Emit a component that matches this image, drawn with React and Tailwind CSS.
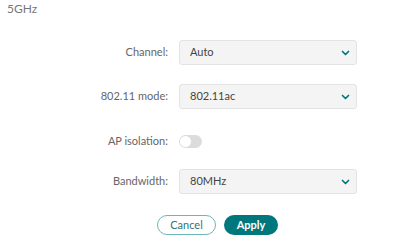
import React, { useState } from 'react';

const Chevron = () => (
  <svg width="9" height="6" viewBox="0 0 9 6" className="shrink-0">
    <path d="M1.5 1.5 L4.5 4.5 L7.5 1.5" fill="none" stroke="#00777d" strokeWidth="1.7" strokeLinecap="round" strokeLinejoin="round" />
  </svg>
);

const Select = ({ value }) => (
  <div className="w-[178px] h-[25px] bg-[#f4f4f4] border border-[#e3e3e3] rounded-[3px] flex items-center justify-between pl-[10px] pr-[6px] text-[11px] text-[#444]">
    <span>{value}</span>
    <Chevron />
  </div>
);

const Row = ({ label, className, children }) => (
  <div className={`flex items-center ${className}`}>
    <div className="w-[168px] text-right text-[11px] text-[#666]">{label}</div>
    <div className="ml-[11px] flex">{children}</div>
  </div>
);

const App = () => {
  const [iso, setIso] = useState(false);
  return (
    <div className="w-[400px] h-[249px] bg-white relative" style={{ fontFamily: 'Lato, "Liberation Sans", sans-serif' }}>
      <div className="pl-[7px] pt-[1px] text-[12px] leading-[16px] text-[#777]">5GHz</div>
      <div className="mt-[23px] flex flex-col">
        <Row label="Channel:"><Select value="Auto" /></Row>
        <Row label="802.11 mode:" className="mt-[19px]"><Select value="802.11ac" /></Row>
        <Row label="AP isolation:" className="mt-[26px] h-[13px]">
          <button onClick={() => setIso(!iso)} className="w-[23px] h-[13px] rounded-full bg-[#dcdcdc] flex items-center px-[1px]">
            <span className="w-[11px] h-[11px] rounded-full bg-white block" />
          </button>
        </Row>
        <Row label="Bandwidth:" className="mt-[21px]"><Select value="80MHz" /></Row>
      </div>
      <div className="mt-[21px] flex gap-[8px] pl-[157px]">
        <button className="w-[59px] h-[20px] rounded-full border border-[#6fb5b8] text-[11px] text-[#2f7579] bg-white">Cancel</button>
        <button className="w-[54px] h-[20px] rounded-full bg-[#00777d] text-[11px] font-bold text-white">Apply</button>
      </div>
    </div>
  );
};

export default App;
